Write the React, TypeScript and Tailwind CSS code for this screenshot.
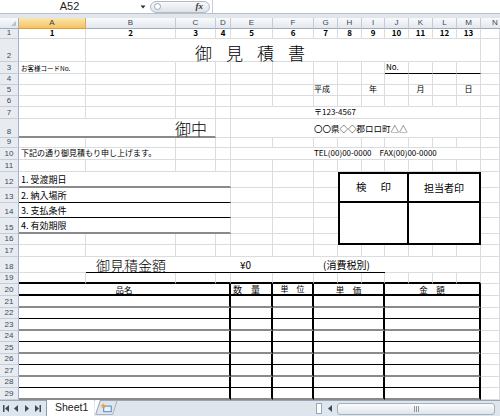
import React from 'react'

type Cell = {
  s?: number
  rs?: number
  r?: string
  b?: string
  v?: string
  c?: string
  t?: React.ReactNode
}

const SPAN: Record<number, string> = {
  1: '',
  2: 'col-span-2',
  3: 'col-span-3',
  4: 'col-span-4',
  9: 'col-span-9',
  12: 'col-span-12',
}
const ROWSPAN: Record<number, string> = { 1: '', 2: 'row-span-2', 3: 'row-span-3' }

// borders
const GR = 'border-r border-r-[#dadcdd]'
const GB = 'border-b border-b-[#dadcdd]'
const THICK_R = 'border-r-2 border-r-black'
const THICK_B = 'border-b-2 border-b-black'
const THIN_B = 'border-b border-b-black'
const GRAY_B = 'border-b-2 border-b-[#8a8a8a]'

const blank = (n: number): Cell[] => Array.from({ length: n }, () => ({}))

const COLS = ['A', 'B', 'C', 'D', 'E', 'F', 'G', 'H', 'I', 'J', 'K', 'L', 'M']

const TERMS = ['1. 受渡期日', '2. 納入場所', '3. 支払条件', '4. 有効期限']

const tableRow = (b: string): Cell[] => [
  { s: 4, r: THICK_R, b },
  { r: THICK_R, b },
  { r: THICK_R, b },
  { s: 3, r: THICK_R, b },
  { s: 4, r: THICK_R, b },
  {},
]

const rows: Cell[][] = [
  // 1
  [...Array.from({ length: 13 }, (_, i): Cell => ({ t: i + 1, c: 'justify-center font-bold pb-[1px]' })), {}],
  // 2
  [{}, { s: 12, c: 'pl-[109px] text-[17px] font-light tracking-[14px]', t: '御見積書' }, {}],
  // 3
  [
    { c: 'pl-[2px] pb-[2px] text-[6.5px]', t: 'お客様コードNo.' },
    ...blank(8),
    { b: THIN_B, c: 'pl-px pb-[2px]', t: 'No.' },
    { b: THIN_B },
    { b: THIN_B },
    { b: THIN_B },
    {},
  ],
  // 4
  blank(14),
  // 5
  [
    ...blank(6),
    { c: 'pb-[2px]', t: '平成' },
    {},
    { c: 'justify-center pb-[2px]', t: '年' },
    {},
    { c: 'justify-center pb-[2px]', t: '月' },
    {},
    { c: 'justify-center pb-[2px]', t: '日' },
    {},
  ],
  // 6
  blank(14),
  // 7
  [...blank(4), { s: 9, c: 'pl-[83px] pb-[2px]', t: '〒123-4567' }, {}],
  // 8
  [
    { s: 3, b: GRAY_B, c: 'justify-end pr-[8px] text-[16px] font-light', t: '御中' },
    {},
    { s: 9, v: 'items-center', c: 'pl-[83px] text-[8.5px]', t: '〇〇県◇◇郡ロロ町△△' },
    {},
  ],
  // 9
  blank(14),
  // 10
  [
    { s: 2, c: 'pl-[2px] pb-[2px]', t: '下記の通り御見積もり申し上げます。' },
    {},
    {},
    { s: 9, c: 'pl-[83px] pb-[2px]', t: 'TEL(00)00-0000　FAX(00)00-0000' },
    {},
  ],
  // 11
  blank(14),
  // 12
  [
    { s: 4, b: GRAY_B, c: 'pl-[2px] pb-[2px] text-[9px]', t: TERMS[0] },
    {},
    {},
    { r: '' },
    {
      s: 3,
      rs: 2,
      r: THICK_R,
      b: THICK_B,
      v: 'items-center',
      c: 'border-l-2 border-l-black border-t-2 border-t-black justify-center gap-[14px] text-[10.5px]',
      t: (
        <>
          <span>検</span>
          <span>印</span>
        </>
      ),
    },
    {
      s: 3,
      rs: 2,
      r: THICK_R,
      b: THICK_B,
      v: 'items-center',
      c: 'border-t-2 border-t-black justify-center text-[10px]',
      t: '担当者印',
    },
    {},
  ],
  // 13
  [{ s: 4, b: THIN_B, c: 'pl-[2px] pb-[2px] text-[9px]', t: TERMS[1] }, {}, {}, { r: '' }, {}],
  // 14
  [
    { s: 4, b: THIN_B, c: 'pl-[2px] pb-[2px] text-[9px]', t: TERMS[2] },
    {},
    {},
    { r: '' },
    { s: 3, rs: 3, r: THICK_R, b: THICK_B, c: 'border-l-2 border-l-black' },
    { s: 3, rs: 3, r: THICK_R, b: THICK_B },
    {},
  ],
  // 15
  [{ s: 4, b: GRAY_B, c: 'pl-[2px] pb-[2px] text-[9px]', t: TERMS[3] }, {}, {}, { r: '' }, {}],
  // 16
  [...blank(6), { r: '' }, {}],
  // 17
  blank(14),
  // 18
  [
    { r: '' },
    { s: 3, r: '', b: THIN_B, c: 'pl-[10px] text-[14px] font-light', t: '御見積金額' },
    { s: 2, r: '', b: THIN_B, c: 'pl-[9px] pb-[2px] text-[10px]', t: '¥0' },
    { s: 3, r: '', b: THIN_B, c: 'pl-[9px] pb-[2px] text-[10px]', t: '(消費税別)' },
    { s: 4 },
    {},
  ],
  // 19
  [...Array.from({ length: 13 }, (): Cell => ({ b: THICK_B })), {}],
  // 20
  [
    { s: 4, r: THICK_R, b: THICK_B, v: 'items-center', c: 'justify-center text-[8.5px]', t: '品名' },
    { r: THICK_R, b: THICK_B, v: 'items-center', c: 'pl-[2px] text-[9px]', t: '数　量' },
    { r: THICK_R, b: THICK_B, v: 'items-center', c: 'justify-center text-[8px]', t: '単　位' },
    { s: 3, r: THICK_R, b: THICK_B, v: 'items-center', c: 'justify-center text-[8.5px]', t: '単　価' },
    { s: 4, r: THICK_R, b: THICK_B, v: 'items-center', c: 'justify-center text-[8.5px]', t: '金　額' },
    {},
  ],
  // 21 - 29
  ...Array.from({ length: 9 }, (_, i) => tableRow(i % 2 === 0 ? GRAY_B : THIN_B)),
]

function SheetCell({ s = 1, rs = 1, r = GR, b = GB, v = 'items-end', c = '', t }: Cell) {
  return (
    <div className={`${SPAN[s]} ${ROWSPAN[rs]} ${r} ${b} ${v} flex whitespace-nowrap leading-none min-w-0 ${c}`}>
      {t}
    </div>
  )
}

function RowHead({ n }: { n: number }) {
  return (
    <div className="bg-[#e8ecf1] border-r border-r-[#9fb1c5] border-b border-b-[#c6cdd6] flex items-end justify-center pb-[1px] text-[8px] leading-none text-[#3a4a5e] font-['Liberation_Sans',sans-serif]">
      {n}
    </div>
  )
}

function ColHead({ label, active }: { label: string; active?: boolean }) {
  return (
    <div
      className={
        active
          ? 'bg-linear-to-b from-[#fbe6ad] to-[#f3c460] border-r border-r-[#d9ab56] border-b border-b-[#e29c35] flex items-center justify-center text-[8px] text-[#3b3b3b] font-[\'Liberation_Sans\',sans-serif]'
          : 'bg-linear-to-b from-[#f9fafb] to-[#e3e8ee] border-r border-r-[#c4cbd4] border-b border-b-[#9eacbc] flex items-center justify-center text-[8px] text-[#3b4756] font-[\'Liberation_Sans\',sans-serif]'
      }
    >
      {label}
    </div>
  )
}

function FormulaBar() {
  return (
    <>
      <div className="h-[14px] flex bg-white border-b border-b-[#b7c0cc] font-['Liberation_Sans',sans-serif]">
        <div className="w-[139px] flex items-center justify-center text-[11px] text-[#1e1e1e]">A52</div>
        <svg className="w-[8px] h-full" viewBox="0 0 8 13">
          <path d="M1.5 5.5h5l-2.5 3z" fill="#2f2f2f" />
        </svg>
        <div className="ml-[3px] w-[60px] h-[12px] my-auto rounded-full border border-[#b3bac5] bg-linear-to-b from-[#f7f8fa] to-[#dfe3e9] flex items-center pl-[3px] pr-[6px]">
          <div className="w-[7px] h-[7px] rounded-full border border-[#9ca5b1] bg-white" />
          <span className="ml-auto italic font-bold text-[9px] leading-none font-['Liberation_Serif',serif] text-[#333]">fx</span>
        </div>
        <div className="flex-1 ml-[2px] border-l border-l-[#c5ccd5]" />
      </div>
      <div className="h-[4px] bg-[#e1e6ec]" />
    </>
  )
}

function TabBar() {
  return (
    <div className="h-[16px] flex bg-[#dfe5ed] border-t border-t-[#9aa6b4] font-['Liberation_Sans',sans-serif]">
      <svg className="w-[46px] h-full" viewBox="0 0 46 15">
        <g fill="#3c4a5e">
          <rect x="3" y="4" width="1.5" height="7" />
          <path d="M9 4v7l-4-3.5z" />
          <path d="M18 4v7l-4-3.5z" />
          <path d="M25 4v7l4-3.5z" />
          <path d="M35 4v7l4-3.5z" />
          <rect x="39.5" y="4" width="1.5" height="7" />
        </g>
      </svg>
      <div className="w-[48px] -mt-px bg-white border-l border-l-[#8e99a7] flex items-center pl-[8px] text-[10.5px] text-[#222]">
        Sheet1
      </div>
      <svg className="w-[26px] h-full -mt-px" viewBox="0 0 26 16">
        <path d="M0 0h6l-5 15H0z" fill="#fff" />
        <path d="M6 0L1 15" stroke="#8e99a7" strokeWidth="1" />
        <path d="M1 15.5h18L24 0" stroke="#a4aebb" strokeWidth="1" fill="none" />
        <rect x="9.5" y="6.5" width="8" height="6" fill="#eaf2fb" stroke="#4f7fb8" />
        <path d="M9 3.2l.9 1.8 2 .3-1.4 1.4.3 2-1.8-.9-1.8.9.3-2L6.1 5.3l2-.3z" fill="#f2a23a" />
      </svg>
      <div className="flex-1" />
      <div className="w-[6px] h-[11px] my-auto bg-white border border-[#9aa6b4]" />
      <svg className="w-[14px] h-full" viewBox="0 0 14 15">
        <path d="M10 4v7l-4-3.5z" fill="#3c4a5e" />
      </svg>
      <div className="ml-px w-[158px] h-[12px] my-auto rounded-[3px] border border-[#a7b1be] bg-linear-to-b from-[#fbfcfd] to-[#dfe5ec] flex items-center justify-center">
        <svg className="w-[5px] h-[6px]" viewBox="0 0 5 6">
          <path d="M0.5 0v6M2.5 0v6M4.5 0v6" stroke="#8c96a3" strokeWidth="1" />
        </svg>
      </div>
      <div className="w-[5px]" />
    </div>
  )
}

export default function App() {
  return (
    <div className="w-[500px] h-[416px] overflow-hidden bg-white">
      <FormulaBar />
      <div className="grid grid-cols-[19px_67px_90px_40px_15px_42px_41px_24px_24px_23px_24px_24px_24px_24px_1fr] grid-rows-[11px_10px_23px_12px_11px_11px_11px_12px_19px_10px_12px_12px_16px_15px_15px_16px_11px_12px_16px_11px_12px_12px_11px_12px_11px_12px_11px_12px_11px_12px] h-[382px] text-[8px] text-black font-['Noto_Sans_CJK_JP',sans-serif]">
        {/* column headers */}
        <div className="bg-linear-to-b from-[#f9fafb] to-[#e3e8ee] border-r border-r-[#9fb1c5] border-b border-b-[#9eacbc] flex items-end justify-end p-[2px]">
          <svg className="w-[5px] h-[5px]" viewBox="0 0 5 5">
            <path d="M5 0v5H0z" fill="#b9c1cb" />
          </svg>
        </div>
        {COLS.map((col, i) => (
          <ColHead key={col} label={col} active={i === 0} />
        ))}
        <div className="bg-linear-to-b from-[#f9fafb] to-[#e3e8ee] border-b border-b-[#9eacbc] flex items-center pl-[11px] text-[8px] text-[#3b4756] font-['Liberation_Sans',sans-serif]">
          N
        </div>

        {rows.map((cells, i) => (
          <React.Fragment key={i}>
            <RowHead n={i + 1} />
            {cells.map((cell, j) => (
              <SheetCell key={j} {...cell} />
            ))}
          </React.Fragment>
        ))}
      </div>
      <TabBar />
    </div>
  )
}
